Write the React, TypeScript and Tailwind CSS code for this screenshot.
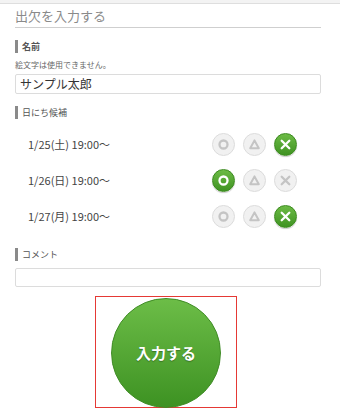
import React from "react";

type Mark = "o" | "t" | "x";

const rows: { date: string; sel: Mark }[] = [
  { date: "1/25(土) 19:00〜", sel: "x" },
  { date: "1/26(日) 19:00〜", sel: "o" },
  { date: "1/27(月) 19:00〜", sel: "x" },
];

function Icon({ mark, on }: { mark: Mark; on: boolean }) {
  const c = on ? "#ffffff" : "#c4c4c4";
  return (
    <svg width="13" height="13" viewBox="0 0 13 13" fill="none">
      {mark === "o" && <circle cx="6.5" cy="6.5" r="4" stroke={c} strokeWidth="2.3" />}
      {mark === "t" && (
        <path d="M6.5 2.4 L10.8 10.2 H2.2 Z" stroke={c} strokeWidth="2" strokeLinejoin="round" />
      )}
      {mark === "x" && (
        <path d="M2.7 2.7 L10.3 10.3 M10.3 2.7 L2.7 10.3" stroke={c} strokeWidth="2.3" strokeLinecap="round" />
      )}
    </svg>
  );
}

function Choice({ mark, on }: { mark: Mark; on: boolean }) {
  return (
    <span
      className={
        on
          ? "flex h-[23px] w-[23px] items-center justify-center rounded-full border border-[#3b8a1e] bg-gradient-to-b from-[#6cbb45] to-[#3f9322] shadow-[0_1px_1px_rgba(0,0,0,0.2)]"
          : "flex h-[23px] w-[23px] items-center justify-center rounded-full border border-[#dcdcdc] bg-[#f1f1f1]"
      }
    >
      <Icon mark={mark} on={on} />
    </span>
  );
}

function Label({ children, bold }: { children: React.ReactNode; bold?: boolean }) {
  return (
    <div className="flex h-[13px] items-center gap-[4px]">
      <span className="h-[13px] w-[3px] bg-[#8a8a8a]" />
      <span
        className={
          bold
            ? "text-[9px] leading-[13px] font-bold text-[#555]"
            : "text-[9px] leading-[13px] font-normal text-[#555]"
        }
      >
        {children}
      </span>
    </div>
  );
}

export default function App() {
  return (
    <div
      className="min-h-[418px] w-[340px] bg-white"
      style={{ fontFamily: '"Noto Sans CJK JP", "Noto Sans", sans-serif' }}
    >
      <div className="h-[4px] border-b border-[#dedede] bg-[#f3f3f3]" />
      <div className="ml-[15px] w-[306px]">
        <h1 className="h-[24px] border-b border-[#cfcfcf] text-[13px] leading-[24px] text-[#8a8a8a]">
          出欠を入力する
        </h1>

        <div className="mt-[12px]">
          <Label bold>名前</Label>
        </div>
        <p className="mt-[6px] text-[8px] leading-[12px] text-[#666]">絵文字は使用できません。</p>
        <div className="mt-[3px] flex h-[20px] items-center rounded-[2px] border border-[#dcdcdc] px-[4px] text-[12px] text-[#333]">
          サンプル太郎
        </div>

        <div className="mt-[12px]">
          <Label>日にち候補</Label>
        </div>
        <div className="mt-[7px]">
          {rows.map((r) => (
            <div key={r.date} className="flex h-[36px] items-center">
              <span className="ml-[13px] text-[11px] text-[#444]">{r.date}</span>
              <div className="ml-auto mr-[24px] flex gap-[8px]">
                {(["o", "t", "x"] as Mark[]).map((m) => (
                  <Choice key={m} mark={m} on={r.sel === m} />
                ))}
              </div>
            </div>
          ))}
        </div>

        <div className="mt-[14px]">
          <Label>コメント</Label>
        </div>
        <div className="mt-[7px] h-[19px] rounded-[2px] border border-[#dcdcdc]" />

        <div className="ml-[80px] mt-[9px] flex h-[112px] w-[142px] justify-center border border-[#e53935] pt-[1px]">
          <button
            type="button"
            className="flex h-[110px] w-[110px] items-center justify-center rounded-full border border-[#3f8c25] bg-gradient-to-b from-[#6cbd47] to-[#3d9222] text-[15px] font-bold text-white [text-shadow:0_1px_1px_rgba(0,0,0,0.3)]"
          >
            入力する
          </button>
        </div>
      </div>
    </div>
  );
}
